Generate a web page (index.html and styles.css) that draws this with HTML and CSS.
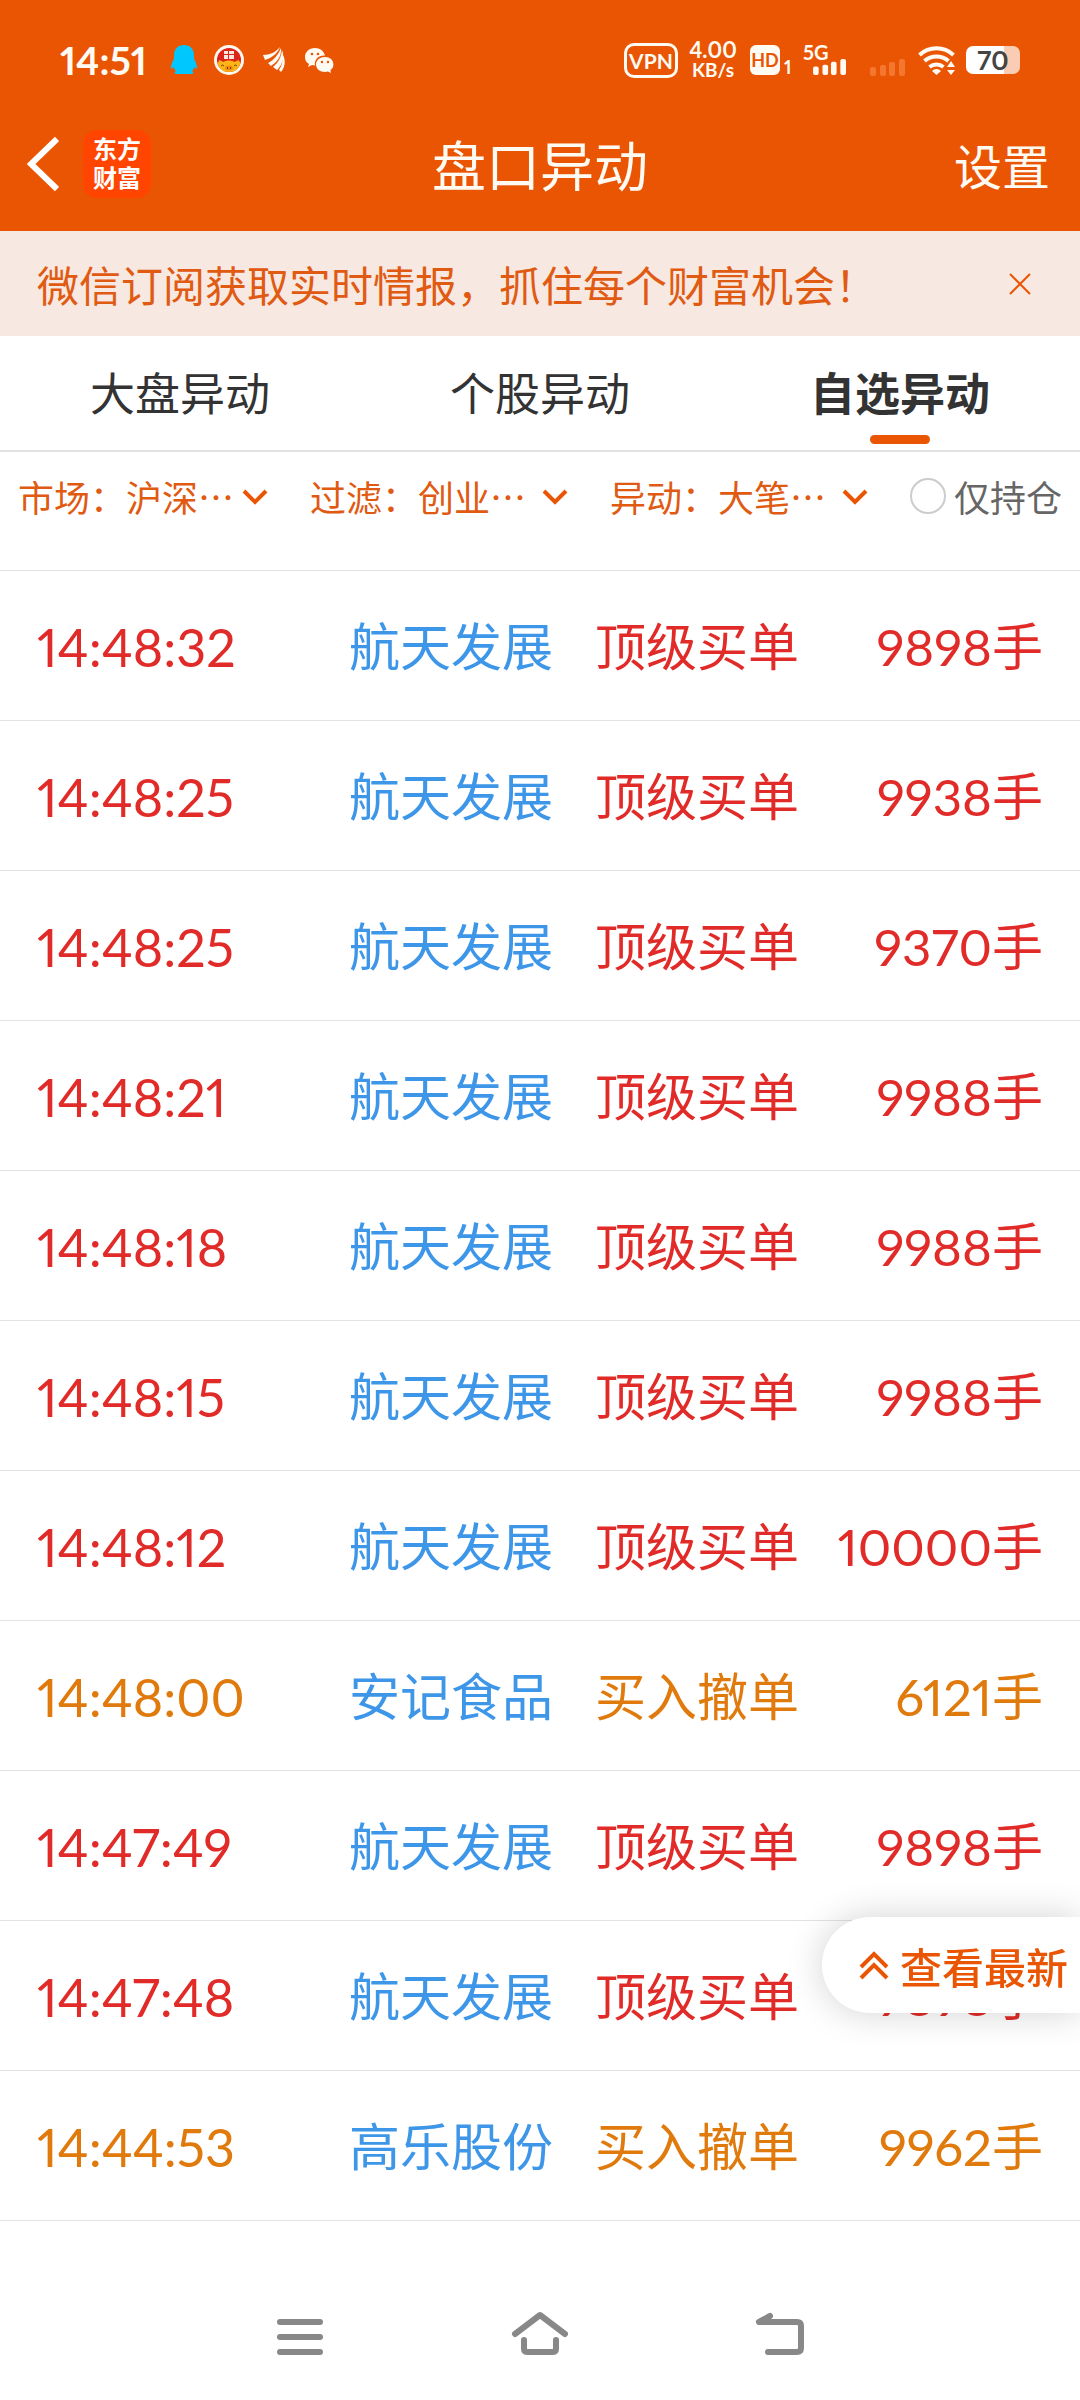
FILE: index.html
```html
<!DOCTYPE html>
<html lang="zh-CN">
<head>
    <meta charset="UTF-8" />
    <meta name="viewport" content="width=device-width, initial-scale=1.0" />
    <title>盘口异动</title>
    <link rel="stylesheet" href="styles.css">
</head>
<body>
    <header class="header">
        <div class="status-bar">
            <div class="status-left">
                <span class="clock">14:51</span>
                <svg class="icon-qq" width="26" height="30" viewBox="0 0 26 30">
                    <path fill="#00c8ff" d="M13 0C7 0 3 4 3 10v4C1 17 0 20 0 23c0 1 1 1 3-1 0 2 1 3 2 4-2 1-2 3 1 3h14c3 0 3-2 1-3 1-1 2-2 2-4 2 2 3 2 3 1 0-3-1-6-3-9v-4c0-6-4-10-10-10z"/>
                </svg>
                <svg class="icon-pig" width="30" height="30" viewBox="0 0 30 30">
                    <circle cx="15" cy="15" r="15" fill="#fff8f0"/>
                    <circle cx="15" cy="15" r="12" fill="#dc2418"/>
                    <path fill="#ffe6dc" d="M10 6h4v3h-4zM15 6h5v3h-5zM10 10h4v4h-4zM15 10h5v4h-5z"/>
                    <path fill="#fbb517" d="M3.500 18l2-3 4 2c3-2 8-2 11 0l4-2 2 3C25 24 21 27 15 27S5 24 3.500 18z"/>
                    <ellipse cx="15" cy="23" rx="4" ry="2.500" fill="#f08c10"/>
                    <path stroke="#7a3c08" fill="none" d="M7 21q1.500-2 3 0M20 21q1.500-2 3 0M13.500 22v2M16.500 22v2"/>
                </svg>
                <svg class="icon-wing" width="22" height="26" viewBox="0 0 22 26">
                    <path fill="#fffaf2" d="M0 8C7 8 13 5 17 0c-2 6-8 11-15 13zM5 16C11 13 15 8 18 1c1 8-4 14-10 18zM10 20c6-5 8-10 9-17 3 7 0 15-5 20zM16 23c3-5 4-9 4-15 3 6 2 12-2 17z"/>
                </svg>
                <svg class="icon-wechat" width="29" height="25" viewBox="0 0 29 25">
                    <path fill="#fffaf2" d="M10 0C4 0 0 4 0 9c0 3 1 5 4 7l-1 3 4-2 3 .6C9 11 14 7 20 7.500 19 3 15 0 10 0z"/>
                    <path fill="#fffaf2" d="M20 9c-5 0-9 3-9 7.500s4 7.500 9 7.500l3-.5 3 1.500-.6-3c2-1 3-3 3-5.500C28.400 12 25 9 20 9z"/>
                    <g fill="#ea5504"><circle cx="7" cy="6" r="1.300"/><circle cx="13" cy="6" r="1.300"/><circle cx="17" cy="14" r="1.200"/><circle cx="23" cy="14" r="1.200"/></g>
                </svg>
            </div>
            <div class="status-right">
                <span class="vpn">VPN</span>
                <span class="speed"><b>4.00</b><b class="unit">KB/s</b></span>
                <span class="hd">HD</span>
                <span class="sim">1</span>
                <span class="signal">
                    <span class="net">5G</span>
                    <svg width="36" height="17" viewBox="0 0 36 17" fill="#fffaf2">
                        <rect x="0" y="8" width="6" height="9" rx="2"/><rect x="10" y="6" width="6" height="11" rx="2"/><rect x="19" y="3" width="6" height="14" rx="2"/><rect x="29" y="0" width="6" height="17" rx="2"/>
                    </svg>
                </span>
                <svg class="signal-off" width="36" height="17" viewBox="0 0 36 17" fill="#f4762f">
                    <rect x="0" y="8" width="6" height="9" rx="2"/><rect x="10" y="6" width="6" height="11" rx="2"/><rect x="19" y="3" width="6" height="14" rx="2"/><rect x="29" y="0" width="6" height="17" rx="2"/>
                </svg>
                <svg class="wifi" width="38" height="29" viewBox="0 0 38 29">
                    <g fill="none" stroke="#fffaf2" stroke-width="4">
                        <path d="M1.500 9a25 25 0 0 1 34 0"/>
                        <path d="M6.500 15a18 18 0 0 1 24 0"/>
                        <path d="M11.500 21a11 11 0 0 1 14 0"/>
                    </g>
                    <path fill="#fffaf2" d="M14 25a6 6 0 0 1 9 0l-4.500 4zM33 15l4 6h-8zM33 29l4-5h-8z"/>
                </svg>
                <span class="battery">70</span>
            </div>
        </div>
        <div class="app-bar">
            <div class="app-left">
                <button class="back" type="button" aria-label="返回">
                    <svg width="32" height="56" viewBox="0 0 32 56" fill="none" stroke="#fff" stroke-width="6"><path d="M30 3L4 28l26 25"/></svg>
                </button>
                <a class="logo" href="#">东方<br>财富</a>
            </div>
            <h1>盘口异动</h1>
            <button class="settings" type="button">设置</button>
        </div>
    </header>

    <section class="notice">
        <p>微信订阅获取实时情报，抓住每个财富机会！</p>
        <button type="button" aria-label="关闭">
            <svg width="22" height="22" viewBox="0 0 22 22" stroke="#ea5504" stroke-width="2"><path d="M1 1l20 20M21 1L1 21"/></svg>
        </button>
    </section>

    <nav class="tabs">
        <a href="#">大盘异动</a>
        <a href="#">个股异动</a>
        <a href="#" class="active">自选异动</a>
    </nav>

    <form class="filters">
        <div class="filter first">
            <label for="market">市场：</label>
            <select id="market"><option>沪深…</option></select>
            <svg width="26" height="16" viewBox="0 0 26 16"><path d="M2 2l11 11L24 2"/></svg>
        </div>
        <div class="filter">
            <label for="board">过滤：</label>
            <select id="board"><option>创业…</option></select>
            <svg width="26" height="16" viewBox="0 0 26 16"><path d="M2 2l11 11L24 2"/></svg>
        </div>
        <div class="filter">
            <label for="change">异动：</label>
            <select id="change"><option>大笔…</option></select>
            <svg width="26" height="16" viewBox="0 0 26 16"><path d="M2 2l11 11L24 2"/></svg>
        </div>
        <div class="holding">
            <input type="checkbox" id="holding" />
            <label for="holding">仅持仓</label>
        </div>
    </form>

    <main>
        <table class="changes">
            <tbody>
                <tr><td>14:48:32</td><td><a href="#">航天发展</a></td><td>顶级买单</td><td>9898手</td></tr>
                <tr><td>14:48:25</td><td><a href="#">航天发展</a></td><td>顶级买单</td><td>9938手</td></tr>
                <tr><td>14:48:25</td><td><a href="#">航天发展</a></td><td>顶级买单</td><td>9370手</td></tr>
                <tr><td>14:48:21</td><td><a href="#">航天发展</a></td><td>顶级买单</td><td>9988手</td></tr>
                <tr><td>14:48:18</td><td><a href="#">航天发展</a></td><td>顶级买单</td><td>9988手</td></tr>
                <tr><td>14:48:15</td><td><a href="#">航天发展</a></td><td>顶级买单</td><td>9988手</td></tr>
                <tr><td>14:48:12</td><td><a href="#">航天发展</a></td><td>顶级买单</td><td>10000手</td></tr>
                <tr class="cancel"><td>14:48:00</td><td><a href="#">安记食品</a></td><td>买入撤单</td><td>6121手</td></tr>
                <tr><td>14:47:49</td><td><a href="#">航天发展</a></td><td>顶级买单</td><td>9898手</td></tr>
                <tr><td>14:47:48</td><td><a href="#">航天发展</a></td><td>顶级买单</td><td>9898手</td></tr>
                <tr class="cancel"><td>14:44:53</td><td><a href="#">高乐股份</a></td><td>买入撤单</td><td>9962手</td></tr>
            </tbody>
        </table>
    </main>

    <button class="latest" type="button">
        <svg width="30" height="30" viewBox="0 0 30 30" fill="none" stroke="#ea5504" stroke-width="4"><path d="M2 17L15 4l13 13M2 28l13-13 13 13"/></svg>
        查看最新
    </button>

    <footer class="system-nav">
        <button type="button" aria-label="最近任务">
            <svg width="60" height="46" viewBox="0 0 60 46"><path d="M10 8h40M10 23h40M10 38h40"/></svg>
        </button>
        <button type="button" aria-label="主页">
            <svg width="60" height="46" viewBox="0 0 60 46"><path d="M5 20L30 1l25 19M14 26v9q0 3 4 3h24q4 0 4-3v-9"/></svg>
        </button>
        <button type="button" aria-label="返回上一页">
            <svg width="60" height="46" viewBox="0 0 60 46"><path d="M20 2L9 8h38q4 0 4 4v22q0 4-4 4H18"/></svg>
        </button>
    </footer>
</body>
</html>
```

FILE: styles.css
```css
* {
    box-sizing: border-box;
}
body {
    font-family: Lato, "Noto Sans CJK SC", sans-serif;
    font-size: 51px;
    font-variant-numeric: proportional-nums;
    background-color: #ffffff;
    color: #333333;
    display: flex;
    flex-direction: column;
    min-height: 100vh;
    margin: 0;
}
button {
    display: flex;
    align-items: center;
    justify-content: center;
    padding: 0;
    border: none;
    background: none;
    font-family: inherit;
    cursor: pointer;
}
a {
    color: inherit;
    text-decoration: none;
}

/* header */
.header {
    background-color: #ea5504;
    color: #fffaf2;
}
.status-bar {
    display: flex;
    justify-content: space-between;
    height: 98px;
    padding: 22px 60px 0;
}
.status-left,
.status-right {
    display: flex;
    align-items: center;
}
.clock {
    width: 95px;
    font-size: 39px;
    font-weight: bold;
    margin-right: 16px;
}
.icon-qq {
    margin-right: 17px;
}
.icon-pig {
    margin-right: 19px;
}
.icon-wing {
    margin-right: 20px;
}
.vpn {
    width: 54px;
    height: 35px;
    border: 3px solid #fffaf2;
    border-radius: 10px;
    font-size: 21px;
    line-height: 29px;
    font-weight: bold;
    text-align: center;
    margin-right: 10px;
}
.speed {
    display: flex;
    flex-direction: column;
    width: 50px;
    font-size: 22px;
    line-height: 20px;
    text-align: center;
    margin-right: 12px;
}
.unit {
    font-size: 19px;
}
.hd {
    width: 30px;
    height: 30px;
    border-radius: 6px;
    background-color: #fffaf2;
    color: #ea5504;
    font-size: 18px;
    line-height: 30px;
    font-weight: bold;
    text-align: center;
    margin-right: 4px;
}
.sim {
    width: 10px;
    font-size: 18px;
    font-weight: bold;
    padding-top: 14px;
    margin-right: 9px;
}
.signal {
    display: flex;
    flex-direction: column;
    height: 30px;
    margin-right: 22px;
}
.net {
    font-size: 20px;
    line-height: 14px;
    font-weight: bold;
}
.signal svg {
    margin-left: 9px;
}
.signal-off {
    margin: 14px 12px 0 0;
}
.wifi {
    margin-right: 10px;
}
.battery {
    width: 54px;
    height: 28px;
    border-radius: 7px;
    background: linear-gradient(90deg, #ffffff 70%, #f9ccb3 70%);
    color: #444444;
    font-size: 26px;
    line-height: 28px;
    font-weight: bold;
    text-align: center;
}
.app-bar {
    display: grid;
    grid-template-columns: 1fr auto 1fr;
    align-items: center;
    height: 133px;
    padding: 0 27px 2px;
}
.app-left {
    display: flex;
    align-items: center;
    gap: 24px;
}
.logo {
    width: 68px;
    height: 68px;
    padding-top: 4px;
    border-radius: 14px;
    background-color: #ff4500;
    color: #ffffff;
    font-size: 24px;
    line-height: 29px;
    font-weight: bold;
    text-align: center;
}
h1 {
    margin: 0;
    font-size: 54px;
    font-weight: normal;
}
.settings {
    justify-self: end;
    padding-right: 3px;
    color: #fffaf2;
    font-size: 48px;
}

/* subscription notice */
.notice {
    display: flex;
    align-items: center;
    justify-content: space-between;
    height: 105px;
    padding: 0 49px 0 37px;
    background-color: #f7e8e1;
    color: #e05a12;
    font-size: 42px;
}
.notice p {
    margin: 0;
}

/* tabs */
.tabs {
    display: flex;
    height: 116px;
    border-bottom: 2px solid #e2e2e2;
    font-size: 45px;
    line-height: 116px;
}
.tabs a {
    flex: 1;
    position: relative;
    text-align: center;
}
.tabs .active {
    font-weight: bold;
}
.tabs .active::after {
    content: "";
    position: absolute;
    left: 50%;
    bottom: 6px;
    width: 60px;
    height: 9px;
    margin-left: -30px;
    border-radius: 5px;
    background-color: #ea5504;
}

/* filters */
.filters {
    display: flex;
    justify-content: space-between;
    height: 118px;
    padding: 17px 18px 0;
    font-family: "Noto Sans CJK SC", sans-serif;
    font-size: 36px;
    line-height: 54px;
}
.filter {
    display: flex;
    position: relative;
    height: 54px;
    color: #e05a12;
}
.filter select {
    appearance: none;
    width: 150px;
    padding: 0;
    border: none;
    background: none;
    color: inherit;
    font: inherit;
}
.first select {
    width: 142px;
}
.filter svg {
    position: absolute;
    right: 0;
    top: 20px;
    fill: none;
    stroke: #ea5504;
    stroke-width: 4;
    pointer-events: none;
}
.holding {
    display: flex;
    align-items: center;
    gap: 8px;
    height: 54px;
    color: #666666;
}
.holding input {
    appearance: none;
    width: 36px;
    height: 36px;
    margin: 0;
    border: 2px solid #cccccc;
    border-radius: 50%;
}

/* list */
main {
    flex: 1;
}
.changes {
    width: 100%;
    table-layout: fixed;
    border-collapse: collapse;
    border-top: 1px solid #e2e2e2;
    color: #e12b28;
}
.changes td {
    height: 150px;
    padding: 2px 0 0;
    border-bottom: 1px solid #e2e2e2;
    line-height: 60px;
    white-space: nowrap;
}
.changes td:first-child {
    width: 349px;
    padding-left: 37px;
    font-size: 52px;
}
.changes td:nth-child(2) {
    width: 246px;
}
.changes td:last-child {
    padding-right: 37px;
    text-align: right;
}
.changes a {
    color: #3e96e8;
}
.changes .cancel {
    color: #e07a0c;
}

.latest {
    position: fixed;
    right: 0;
    bottom: 387px;
    gap: 11px;
    height: 96px;
    padding: 0 12px 0 37px;
    border-radius: 48px 0 0 48px;
    background-color: #ffffff;
    box-shadow: 0 0 36px rgba(0, 0, 0, 0.18);
    color: #ea5504;
    font-size: 42px;
    font-weight: 500;
}

/* system navigation */
.system-nav {
    display: flex;
    justify-content: center;
    height: 126px;
}
.system-nav button {
    width: 240px;
}
.system-nav svg {
    overflow: visible;
    fill: none;
    stroke: #888888;
    stroke-width: 6;
    stroke-linecap: round;
    stroke-linejoin: round;
}
```
